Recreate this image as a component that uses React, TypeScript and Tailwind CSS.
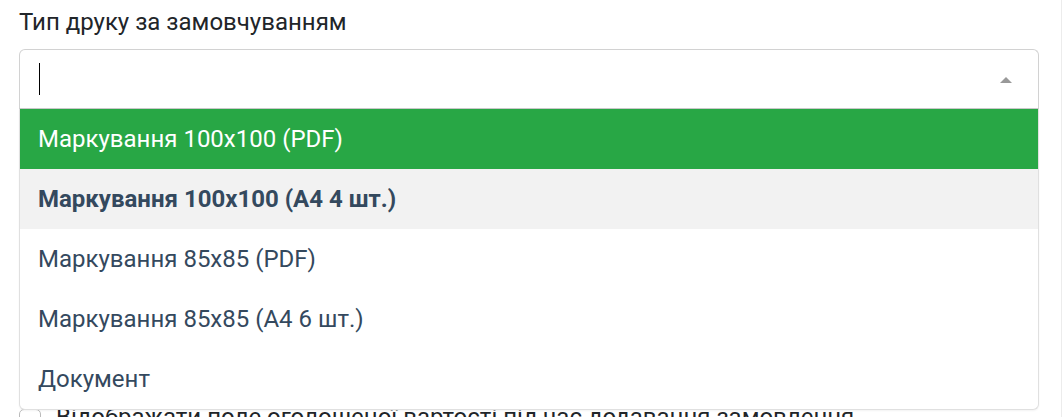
import React from "react";

export default function App() {
  const options = [
    { label: "Маркування 100x100 (PDF)", state: "active" },
    { label: "Маркування 100x100 (A4 4 шт.)", state: "selected" },
    { label: "Маркування 85x85 (PDF)", state: "" },
    { label: "Маркування 85x85 (A4 6 шт.)", state: "" },
    { label: "Документ", state: "" },
  ];
  return (
    <div
      className="w-[1063px] h-[417px] overflow-hidden bg-white relative"
      style={{ fontFamily: "Roboto, 'Noto Sans', sans-serif" }}
    >
      <div className="w-[1062px] h-full border-r border-[#ececec]">
        <div className="pl-[19px] pr-[22px] pt-[4px]">
          <div className="text-[24px] leading-[36px] text-[#212529]">Тип друку за замовчуванням</div>
          <div className="relative mt-[9px]">
            <div className="h-[60px] border border-[#d2d2d2] border-b-[#c8c8c8] rounded-t-[6px] flex items-center pl-[19px] pr-[26px] justify-between">
              <div className="w-[1px] h-[32px] bg-black" />
              <svg width="12" height="6" viewBox="0 0 12 6" className="mt-[1px]">
                <polygon points="0,6 6,0 12,6" fill="#999" />
              </svg>
            </div>
            <div className="h-[290px]" />
            <div className="flex items-start gap-[15px] text-[24px] leading-[36px] text-[#212529] whitespace-nowrap">
              <div className="w-[22px] h-[22px] border border-[#bbb] rounded-[5px] shrink-0 mt-[10px]" />
              <span>Відображати поле оголошеної вартості під час додавання замовлення</span>
            </div>
            <div className="absolute left-0 right-0 top-[60px] bg-white border border-t-0 border-[#e0e0e0] rounded-b-[6px] shadow-[0_1px_2px_rgba(0,0,0,0.05)]">
              {options.map((o) => (
                <div
                  key={o.label}
                  className={
                    "h-[60px] flex items-center pl-[18px] text-[24px] " +
                    (o.state === "active"
                      ? "bg-[#28a745] text-white"
                      : o.state === "selected"
                      ? "bg-[#f2f2f2] text-[#34495e] font-bold"
                      : "text-[#34495e]")
                  }
                >
                  {o.label}
                </div>
              ))}
            </div>
          </div>
        </div>
      </div>
    </div>
  );
}
